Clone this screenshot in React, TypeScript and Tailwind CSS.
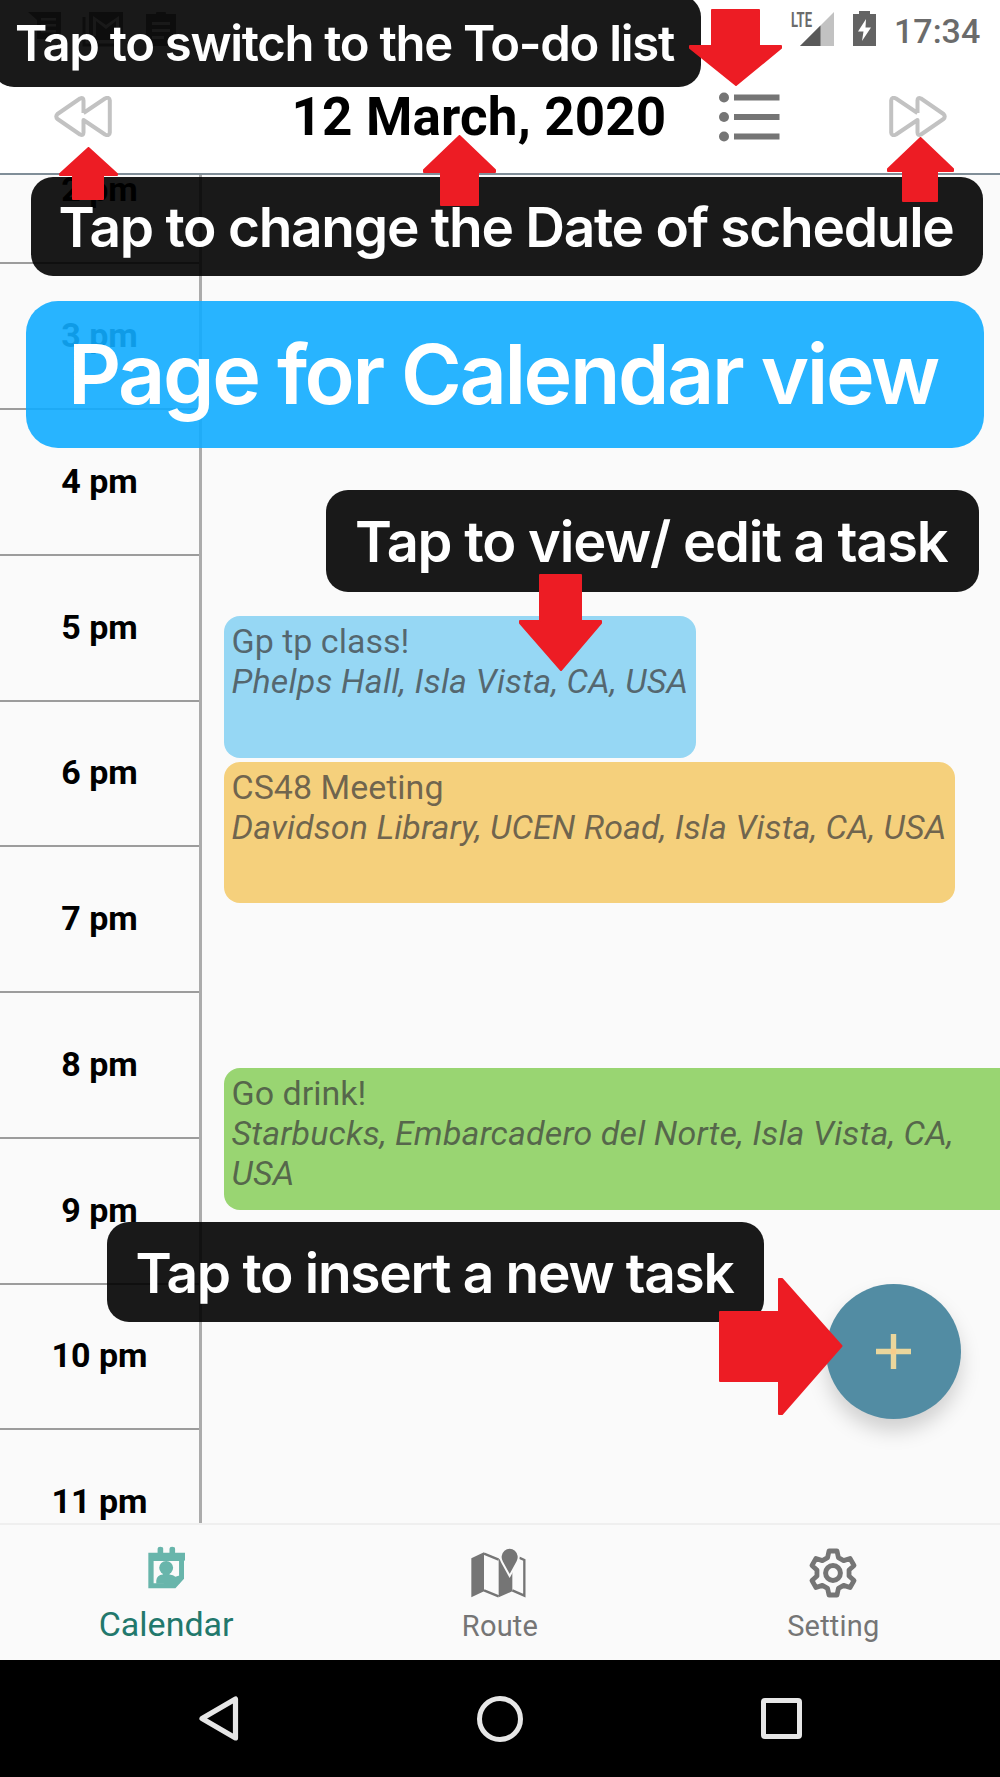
import React from "react";

const HOURS = ["2 pm", "3 pm", "4 pm", "5 pm", "6 pm", "7 pm", "8 pm", "9 pm", "10 pm", "11 pm"];

function gearPath() {
  const parts: string[] = [];
  for (let i = 0; i < 6; i++) {
    const a = ((i * 60 - 90) * Math.PI) / 180;
    const pts = [
      [-5.4, 15.4],
      [-4, 22],
      [4, 22],
      [5.4, 15.4],
    ];
    for (const [t, r] of pts) {
      const x = 25 + r * Math.cos(a) - t * Math.sin(a);
      const y = 25 + r * Math.sin(a) + t * Math.cos(a);
      parts.push(`${x.toFixed(2)} ${y.toFixed(2)}`);
    }
  }
  return `M${parts.join("L")}Z`;
}

function StatusBar() {
  return (
    <div className="flex h-[60px] items-start text-[#6b6b6b]">
      <svg className="ml-7 mt-3 h-[35px] w-[150px]" viewBox="0 0 150 35">
        <path fill="#858585" fillRule="evenodd" d="M0 0H33V27H9V8ZM13 6V8.500H28V6ZM13 12V14.500H28V12ZM13 18V20.500H28V18Z" />
        <path fill="none" stroke="#858585" strokeWidth="3" d="M56 5V33H90" />
        <path fill="#858585" fillRule="evenodd" d="M61 0H95V28H61ZM65 4V24H68V9L78 17L88 9V24H91V4L78 13Z" />
        <path fill="#858585" fillRule="evenodd" d="M118 2H128A5 5 0 0 1 138 2H148V34H118ZM124 10V13H142V10ZM124 17V20H142V17ZM124 24V27H136V24Z" />
      </svg>
      <div className="ml-[613px] mt-2 h-6 w-[9px] whitespace-nowrap">
        <span className="inline-block origin-left scale-x-[0.62] text-[21px] font-bold leading-6">LTE</span>
      </div>
      <svg className="mt-3 h-[34px] w-[34px]" viewBox="0 0 34 34">
        <path d="M34 0V34H0Z" fill="#c2c2c2" />
        <path d="M20.500 13.500V34H0Z" fill="#595959" />
      </svg>
      <svg className="ml-[19px] mt-[11px] h-[35px] w-[23px]" viewBox="0 0 23 35">
        <path d="M6 0H17V3H23V35H0V3H6Z" fill="#636363" />
        <path d="M13 8L5 20.500H10.500L9 30L18 16.500H12.500Z" fill="#fff" />
      </svg>
      <div className="ml-[18px] mt-[11px] text-[34px] font-medium leading-10">17:34</div>
    </div>
  );
}

function SkipIcon({ className }: { className: string }) {
  return (
    <svg className={className} viewBox="0 0 58 41" fill="none" stroke="#c2c2c2" strokeWidth="4" strokeLinejoin="round">
      <path d="M29.500 17V4.500Q29.500 1 26 2.500L3.500 18Q1 20.500 3.500 23L26 38.500Q29.500 40 29.500 36.500V24L51 38.500Q55.500 40.500 55.800 36.500V4.500Q55.500 .500 51 2.500L29.500 17" />
    </svg>
  );
}

function Header() {
  return (
    <header className="h-[175px] border-b-2 border-[#808e98] bg-white">
      <StatusBar />
      <div className="flex h-[113px] items-center">
        <SkipIcon className="ml-[53.5px] h-[41px] w-[58px]" />
        <h1 className="ml-[180px] w-[376px] whitespace-nowrap text-[53px] font-bold leading-[60px] tracking-[0.15px] text-black">
          12 March, 2020
        </h1>
        <svg className="ml-[51.5px] h-[50px] w-[61px]" viewBox="0 0 61 50" fill="#757575">
          <circle cx="5" cy="5.500" r="5" />
          <circle cx="5" cy="25" r="5" />
          <circle cx="5" cy="44.500" r="5" />
          <path d="M15 2.500H60.500V8.500H15ZM15 22H60.500V28H15ZM15 41.500H60.500V47.500H15Z" />
        </svg>
        <SkipIcon className="ml-[108.5px] h-[41px] w-[58px] -scale-x-100" />
      </div>
    </header>
  );
}

function Event({ title, place, className }: { title: string; place: string; className: string }) {
  return (
    <div className={`pl-[7.5px] pt-[5px] text-[34px] leading-10 text-[rgba(60,60,60,0.72)] ${className}`}>
      <div className="tracking-normal">{title}</div>
      <div className="italic">{place}</div>
    </div>
  );
}

function Schedule() {
  return (
    <main className="flex h-[1348px] overflow-hidden">
      <div className="w-[202px] shrink-0 border-r-3 border-[#ababab]">
        <div className="-mt-[56.4px]">
          {HOURS.map((h) => (
            <div
              key={h}
              className="flex h-[145.75px] items-center justify-center border-b-2 border-[#9c9c9c] pb-[2px] text-[34px] font-bold leading-10 text-black"
            >
              {h}
            </div>
          ))}
        </div>
      </div>
      <div className="flex min-w-0 flex-1 flex-col items-start pl-[22px] pt-[441px]">
        <Event
          title="Gp tp class!"
          place="Phelps Hall, Isla Vista, CA, USA"
          className="h-[142px] w-[472px] shrink-0 whitespace-nowrap rounded-2xl bg-[#96d7f4] tracking-[0.18px]"
        />
        <Event
          title="CS48 Meeting"
          place="Davidson Library, UCEN Road, Isla Vista, CA, USA"
          className="mt-1 h-[141px] w-[731px] shrink-0 whitespace-nowrap rounded-2xl bg-[#f5d07c] tracking-[0.07px]"
        />
        <Event
          title="Go drink!"
          place="Starbucks, Embarcadero del Norte, Isla Vista, CA, USA"
          className="mt-[165px] h-[142px] w-full shrink-0 rounded-l-2xl bg-[#99d572] pr-5 tracking-[0.13px]"
        />
      </div>
    </main>
  );
}

function TabBar() {
  return (
    <nav className="grid h-[137px] grid-cols-3 border-t-2 border-[#efefef] bg-[#fafafa]">
      <div className="flex flex-col items-center pt-[21px]">
        <svg className="ml-[-1px] h-[43px] w-[37px]" viewBox="443 109 112 128">
          <path
            fill="#68b5ab"
            fillRule="evenodd"
            d="M472 128V116Q472 110 480 110Q489 110 489 116V128H508V116Q508 110 516 110Q525 110 525 116V128H555V150L552 154V207L526 236H444V128ZM460 153V221H490L537 199V153Z"
          />
          <circle cx="498" cy="174" r="21" fill="#68b5ab" />
          <path fill="#68b5ab" d="M468 222V212Q470 196 488 194V185H508V194Q520 195 526 201L538 197V222Z" />
        </svg>
        <span className="mt-[15px] -ml-[1px] text-[34px] leading-10 text-[#22786c]">Calendar</span>
      </div>
      <div className="flex flex-col items-center pt-[21px]">
        <svg className="-ml-[3px] h-[52px] w-[56px]" viewBox="33 18 168 156">
          <path fill="#757575" d="M37 55L75 37V154L37 172ZM119 58L160 58V154L119 172Z" />
          <path fill="none" stroke="#757575" strokeWidth="7" d="M75 41L119 59M75 151L119 169M160 151L196 167V60L180 53" />
          <path fill="#757575" stroke="#fafafa" strokeWidth="6" d="M152 108L129 66A27 28 0 1 1 175 66Z" />
        </svg>
        <span className="mt-[8px] text-[29px] leading-10 tracking-[0.2px] text-[#757575]">Route</span>
      </div>
      <div className="flex flex-col items-center pt-[23px]">
        <svg className="h-[50px] w-[50px]" viewBox="0 0 50 50" fill="none" stroke="#757575" strokeWidth="4.800" strokeLinejoin="round">
          <path d={gearPath()} />
          <circle cx="25" cy="25" r="7.400" strokeWidth="5" />
        </svg>
        <span className="mt-[8px] text-[29px] leading-10 tracking-[0.2px] text-[#757575]">Setting</span>
      </div>
    </nav>
  );
}

function AndroidBar() {
  return (
    <div className="flex h-[117px] items-center bg-black">
      <svg className="ml-[198px] h-[47px] w-[41px]" viewBox="0 0 41 47" fill="none" stroke="#e6e6e6" strokeWidth="5.200" strokeLinejoin="round">
        <path d="M37.500 4V43L4 23.500Z" />
      </svg>
      <div className="ml-[238px] size-[46px] rounded-full border-[5.5px] border-[#e6e6e6]" />
      <div className="ml-[238px] size-[41px] rounded-[4px] border-5 border-[#e6e6e6]" />
    </div>
  );
}

function Callout({ text, className }: { text: string; className: string }) {
  return (
    <div className={`absolute flex items-center whitespace-nowrap font-['Inter',sans-serif] font-semibold text-white ${className}`}>
      {text}
    </div>
  );
}

function Arrow({ className, w, h, points }: { className: string; w: number; h: number; points: string }) {
  return (
    <svg className={`absolute ${className}`} width={w} height={h} viewBox={`0 0 ${w} ${h}`}>
      <polygon points={points} fill="#ed1c24" stroke="#ed1c24" strokeWidth="2" strokeLinejoin="round" />
    </svg>
  );
}

export default function App() {
  return (
    <div className="relative h-[1777px] w-[1000px] overflow-hidden bg-[#fafafa] font-['Roboto',sans-serif]">
      <Header />
      <Schedule />
      <TabBar />
      <AndroidBar />

      <button className="absolute left-[825.5px] top-[1284px] flex size-[135px] items-center justify-center rounded-full bg-[#528ca3] shadow-[0_12px_20px_rgba(0,0,0,0.17)]">
        <svg className="h-[35px] w-[35px]" viewBox="0 0 35 35">
          <path d="M14.800 0H20.200V35H14.800ZM0 14.800H35V20.200H0Z" fill="#ead69c" />
          <path d="M14.800 14.800H20.200V20.200H14.800Z" fill="#f7cd8b" />
        </svg>
      </button>

      <Callout
        text="Tap to switch to the To-do list"
        className="-left-2 -top-[5px] h-[91.5px] w-[709px] rounded-[22px] bg-black/90 pl-[23px] pt-[6px] text-[49px] tracking-[-1.29px]"
      />
      <Callout
        text="Tap to change the Date of schedule"
        className="left-[31px] top-[177px] h-[98.5px] w-[952px] rounded-[22px] bg-black/90 pl-[27.5px] pt-[2px] text-[55px] tracking-[-1.27px]"
      />
      <Callout
        text="Page for Calendar view"
        className="left-[26px] top-[301px] h-[147px] w-[958px] rounded-[32px] bg-[rgba(17,172,255,0.9)] pl-[42px] pt-[1px] text-[82.5px] tracking-[-2.42px]"
      />
      <Callout
        text="Tap to view/ edit a task"
        className="left-[326px] top-[490px] h-[101.500px] w-[653px] rounded-[22px] bg-black/90 pl-[29px] pt-[2px] text-[56px] tracking-[-1.2px]"
      />
      <Callout
        text="Tap to insert a new task"
        className="left-[107px] top-[1222px] h-[99.5px] w-[657px] rounded-[22px] bg-black/90 pl-[28.500px] pt-[3px] text-[55px] tracking-[-1.28px]"
      />

      <Arrow className="left-[689px] top-[9px]" w={93} h={77} points="23,1 70,1 70,37 92,37 92,39 47,76 1,39 1,37 23,37" />
      <Arrow className="left-[59px] top-[147px]" w={59} h={53} points="29.500,1 58,27 58,28 44,28 44,52 14,52 14,28 1,28 1,27" />
      <Arrow className="left-[423px] top-[135px]" w={73} h={71} points="36.500,1 72,35 72,37 55,37 55,70 18,70 18,37 1,37 1,35" />
      <Arrow className="left-[887px] top-[137px]" w={67} h={65} points="33.500,1 66,32 66,34 50,34 50,64 16,64 16,34 1,34 1,32" />
      <Arrow className="left-[519px] top-[574px]" w={83} h={97} points="21,1 62,1 62,47 82,47 82,49 42,96 1,49 1,47 21,47" />
      <Arrow className="left-[719px] top-[1278px]" w={124} h={137} points="1,34 60,34 60,1 63,1 122.500,68 63,136 60,136 60,103 1,103" />
    </div>
  );
}
